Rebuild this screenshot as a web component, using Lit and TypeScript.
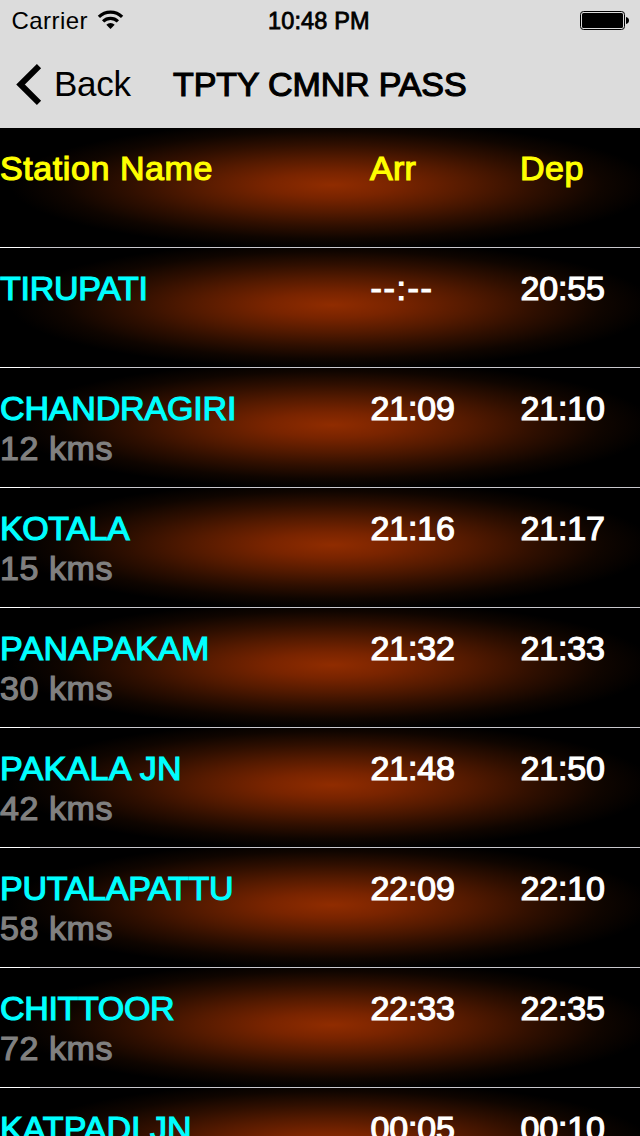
import { LitElement, html, css } from "lit";
import { customElement } from "lit/decorators.js";

const FAMILY = '"Liberation Sans", Arial, sans-serif';
const ctx = document.createElement("canvas").getContext("2d")!;

// Letter spacing that makes the text end at the given distance from its origin.
function tracking(text: string, size: number, extent: number): string {
  ctx.font = `${size}px ${FAMILY}`;
  const ink = ctx.measureText(text).actualBoundingBoxRight;
  return `letter-spacing:${((extent - ink) / (text.length - 1)).toFixed(3)}px`;
}

const label = (cls: string, text: string, extent: number, size = 34) =>
  html`<span class=${cls} style=${tracking(text, size, extent)}>${text}</span>`;

interface Stop {
  name: string;
  extent: number;
  arr: string;
  dep: string;
  kms?: string;
}

const stops: Stop[] = [
  { name: "TIRUPATI", extent: 145.5, arr: "--:--", dep: "20:55" },
  { name: "CHANDRAGIRI", extent: 234, arr: "21:09", dep: "21:10", kms: "12 kms" },
  { name: "KOTALA", extent: 130, arr: "21:16", dep: "21:17", kms: "15 kms" },
  { name: "PANAPAKAM", extent: 207, arr: "21:32", dep: "21:33", kms: "30 kms" },
  { name: "PAKALA JN", extent: 181, arr: "21:48", dep: "21:50", kms: "42 kms" },
  { name: "PUTALAPATTU", extent: 231, arr: "22:09", dep: "22:10", kms: "58 kms" },
  { name: "CHITTOOR", extent: 173, arr: "22:33", dep: "22:35", kms: "72 kms" },
  { name: "KATPADI JN", extent: 189, arr: "00:05", dep: "00:10" },
];

@customElement("app-root")
export class AppRoot extends LitElement {
  static styles = css`
    :host {
      display: flex;
      flex-direction: column;
      width: 640px;
      height: 1136px;
      overflow: hidden;
      background: #000;
      font-family: "Liberation Sans", Arial, sans-serif;
      font-size: 34px;
      line-height: 40px;
    }
    span {
      white-space: nowrap;
    }
    .top {
      flex: none;
      height: 128px;
      background: #dcdcdc;
      color: #000;
    }
    .status {
      display: grid;
      grid-template-columns: 97px 171px 312px 1fr;
      height: 40px;
      font-size: 24px;
    }
    .carrier {
      padding-left: 11.5px;
      line-height: 41px;
    }
    .clock {
      font-size: 23.5px;
      line-height: 42px;
      -webkit-text-stroke: 0.8px #000;
    }
    .wifi,
    .battery {
      margin-top: 10px;
    }
    .nav {
      display: flex;
      height: 88px;
      padding-top: 24px;
      box-sizing: border-box;
    }
    .chevron {
      flex: none;
      margin-left: 16px;
    }
    .back {
      width: 119px;
      margin-left: 1px;
      font-size: 35px;
    }
    .title {
      -webkit-text-stroke: 1.2px #000;
    }
    .list {
      flex: none;
    }
    .row {
      height: 120px;
      box-sizing: border-box;
      padding-top: 20px;
      display: grid;
      grid-template-columns: 370px 150px 1fr;
      grid-template-rows: 40px 40px 19px 1px;
      background: radial-gradient(
        ellipse 322px 64px at 332px 57px,
        #902c00 0%,
        #792400 20%,
        #551a00 42%,
        #300f00 63%,
        #0f0500 84%,
        #000 100%
      );
    }
    .line {
      grid-row: 4;
      grid-column: 1 / 4;
      background: linear-gradient(90deg, #fff 30px, #c8c7cc 30px);
    }
    .heading,
    .name,
    .time,
    .kms {
      grid-row: 1;
      -webkit-text-stroke: 1.2px currentColor;
    }
    .heading {
      color: #ff0;
    }
    .name {
      color: #0ff;
    }
    .time {
      padding-left: 0.5px;
      color: #fff;
    }
    .kms {
      grid-row: 2;
      grid-column: 1;
      color: #808080;
    }
  `;

  render() {
    return html`
      <header class="top">
        <div class="status">
          ${label("carrier", "Carrier", 76, 24)}
          <svg class="wifi" width="28" height="20" viewBox="0 0 28 20">
            <g fill="none" stroke="#000" stroke-width="3.200">
              <path d="M1.9 6.9A16.5 16.5 0 0 1 25.1 6.9" />
              <path d="M6.1 11.3A10.6 10.6 0 0 1 20.9 11.3" />
            </g>
            <path d="M13.5 19L9.3 14.7A6.2 6.2 0 0 1 17.7 14.7Z" />
          </svg>
          ${label("clock", "10:48 PM", 100, 23.5)}
          <svg class="battery" width="52" height="21" viewBox="0 0 52 21">
            <rect x="0.5" y="1.5" width="44" height="18" rx="3" fill="none" stroke="#000" />
            <rect x="2" y="3" width="41" height="15" rx="1.5" />
            <path d="M46 7c4 .5 4 6.500 0 7z" />
          </svg>
        </div>
        <div class="nav">
          <svg class="chevron" width="37" height="42" viewBox="0 0 37 42">
            <path d="M23 2.200L4.500 20.500L23 38.800" fill="none" stroke="#000" stroke-width="6" />
          </svg>
          ${label("back", "Back", 77.5, 35)}
          ${label("title", "TPTY CMNR PASS", 293.5)}
        </div>
      </header>
      <main class="list">
        <div class="row">
          ${label("heading", "Station Name", 211.5)}
          ${label("heading", "Arr", 45.5)}
          ${label("heading", "Dep", 62.5)}
          <div class="line"></div>
        </div>
        ${stops.map(
          (s) => html`<div class="row">
            ${label("name", s.name, s.extent)}
            ${label("time", s.arr, s.arr.startsWith("-") ? 60 : 83.5)}
            ${label("time", s.dep, 83.5)}
            ${s.kms ? label("kms", s.kms, 111.5) : ""}
            <div class="line"></div>
          </div>`
        )}
      </main>
    `;
  }
}
